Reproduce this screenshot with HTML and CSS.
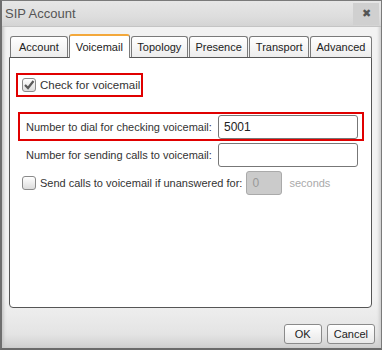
FILE: index.html
```html
<!DOCTYPE html>
<html lang="en">

<head>
    <meta charset="UTF-8">
    <title>SIP Account</title>
    <link rel="stylesheet" href="styles.css">
</head>

<body>

    <div class="dialog">
        <div class="titlebar">
            <span class="title">SIP Account</span>
            <span class="closeButton">&#x2716;</span>
        </div>

        <div class="tabs">
            <div class="tab first">Account</div>
            <div class="tab active">Voicemail</div>
            <div class="tab">Topology</div>
            <div class="tab">Presence</div>
            <div class="tab">Transport</div>
            <div class="tab">Advanced</div>
        </div>

        <div class="panel">
            <div class="highlight checkRow first">
                <span class="checkbox">
                    <svg width="12" height="12" viewBox="0 0 12 12">
                        <path d="M2 6 L5 9 L10.5 2" fill="none" stroke="#5a5a5a" stroke-width="2.2" />
                    </svg>
                </span>
                <span>Check for voicemail</span>
            </div>

            <div class="highlight fieldRow boxed">
                <label for="dialNumber">Number to dial for checking voicemail:</label>
                <input type="text" id="dialNumber" value="5001">
            </div>

            <div class="fieldRow">
                <label for="sendNumber">Number for sending calls to voicemail:</label>
                <input type="text" id="sendNumber" value="">
            </div>

            <div class="checkRow last">
                <span class="checkbox"></span>
                <span>Send calls to voicemail if unanswered for:</span>
                <input type="text" class="small" value="0" disabled>
                <span class="muted">seconds</span>
            </div>
        </div>

        <div class="footer">
            <button class="okButton">OK</button>
            <button>Cancel</button>
        </div>
    </div>

</body>

</html>
```

FILE: styles.css
```css
body {
    margin: 0;
    font-family: "Liberation Sans", Arial, sans-serif;
    font-size: 11px;
    color: #333;
}

.dialog {
    width: 382px;
    height: 350px;
    box-sizing: border-box;
    border: 1px solid #7a7a7a;
    border-left: 2px solid #6e6e6e;
    border-bottom: 2px solid #6a6a6a;
    background: linear-gradient(#f2f2f2 85%, #e4e4e4 96%, #cfcfcf);
    box-shadow: inset 2px 0 3px #c8c8c8, inset -2px 0 3px #d0d0d0;
}

.titlebar {
    height: 25px;
    display: flex;
    align-items: center;
    justify-content: space-between;
    padding-left: 3px;
    background: linear-gradient(#e6e6e6, #dedede 60%, #d4d4d4);
    border-bottom: 1px solid #c4c4c4;
}

.title {
    font-size: 13px;
    color: #555;
}

.closeButton {
    width: 26px;
    height: 22px;
    margin-right: 2px;
    display: flex;
    align-items: center;
    justify-content: center;
    background: #d0d0d0;
    color: #555;
    font-size: 11px;
}

.tabs {
    display: flex;
    align-items: flex-end;
    height: 22px;
    margin: 8px 0 0 8px;
    gap: 1px;
    position: relative;
    z-index: 1;
}

.tab {
    height: 20px;
    line-height: 20px;
    padding: 0 5.5px;
    border: 1px solid #7a7a7a;
    border-bottom: none;
    border-radius: 3px 3px 0 0;
    background: linear-gradient(#ffffff, #ededed);
    color: #222;
}

.tab.first {
    padding: 0 8px;
}

.tab.active {
    height: 22px;
    line-height: 22px;
    padding: 0 6px;
    margin-bottom: -1px;
    border-top: 2px solid #f3a83b;
    background: #fff;
}

.panel {
    height: 251px;
    box-sizing: border-box;
    margin: 0 9px 0 7px;
    border: 1px solid #555;
    border-radius: 0 0 4px 4px;
    background: #fff;
}

.highlight {
    border: 2px solid #e00000;
}

.checkRow {
    display: flex;
    align-items: center;
    gap: 4px;
    white-space: nowrap;
}

.checkRow.first {
    width: 127px;
    height: 24px;
    box-sizing: border-box;
    margin: 15px 0 0 6px;
    padding-left: 4px;
    font-size: 11.5px;
}

.checkRow.last {
    margin: 4px 0 0 12px;
    height: 24px;
}

.checkbox {
    flex: none;
    width: 12px;
    height: 12px;
    border: 1px solid #8a8a8a;
    border-radius: 3px;
    background: linear-gradient(#ffffff, #dcdcdc);
    display: flex;
    align-items: center;
    justify-content: center;
}

.fieldRow {
    display: flex;
    align-items: center;
    padding-left: 16px;
    margin-top: 2px;
}

.fieldRow label {
    width: 192px;
    white-space: nowrap;
}

.fieldRow.boxed {
    margin: 15px 0 0 8px;
    width: 346px;
    box-sizing: border-box;
    padding: 1px 4px 0 6px;
}

input {
    width: 140px;
    height: 24px;
    box-sizing: border-box;
    border: 1px solid #777;
    border-radius: 3px;
    padding: 0 5px;
    font-family: "Liberation Sans", Arial, sans-serif;
    font-size: 12px;
    color: #222;
}

input.small {
    width: 36px;
    background: #cbcbcb;
    border-color: #aaa;
    color: #999;
}

.muted {
    margin-left: 3px;
    color: #aaa;
}

.footer {
    display: flex;
    justify-content: flex-end;
    gap: 5px;
    margin: 16px 6px 0 0;
}

button {
    height: 20px;
    padding: 0 6px;
    border: 1px solid #8a8a8a;
    border-radius: 3px;
    background: linear-gradient(#ffffff, #e8e8e8);
    font-family: "Liberation Sans", Arial, sans-serif;
    font-size: 11px;
    color: #222;
}

.okButton {
    width: 38px;
}
```
